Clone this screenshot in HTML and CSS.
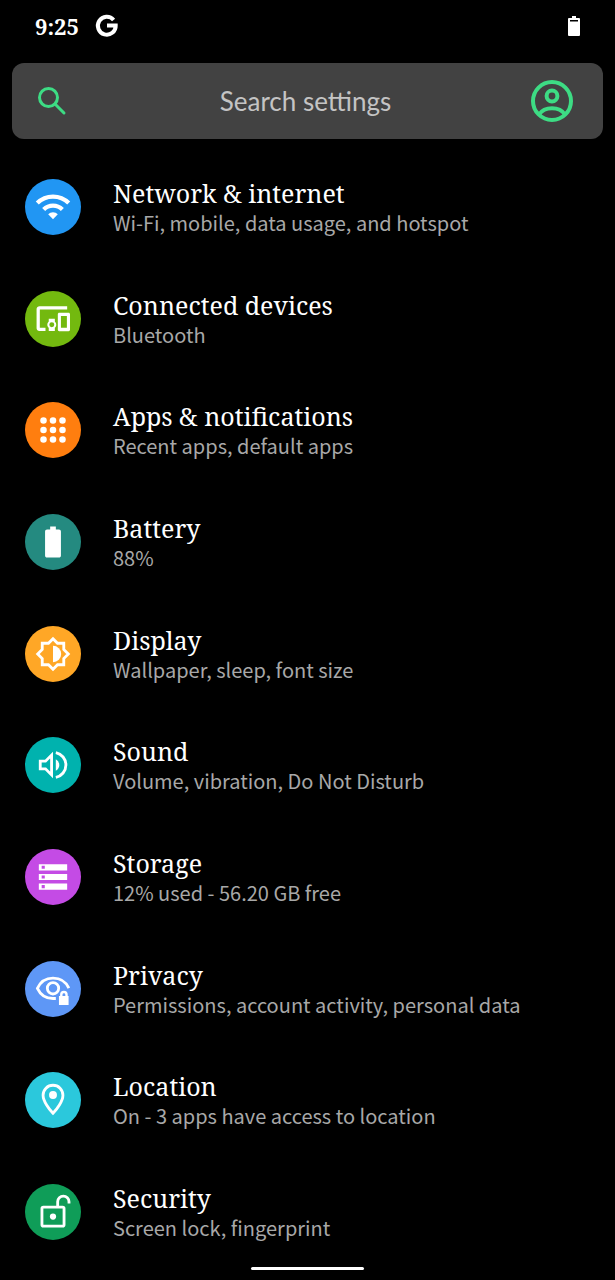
FILE: index.html
```html
<!DOCTYPE html>
<html lang="en">
	<head>
		<meta charset="utf-8">
		<meta name="viewport" content="width=device-width, initial-scale=1">
		<title>Settings</title>
		<link rel="stylesheet" href="styles.css">
	</head>
	<body>
		<header class="status">
			<span class="clock">9:25</span>
			<svg class="google" viewBox="0 0 22 22" aria-hidden="true"><path d="M17.6 5A8.900 8.900 0 1 0 19.700 10.500H11" fill="none" stroke="#fff" stroke-width="4"/></svg>
			<svg class="charge" viewBox="0 0 12 20" aria-hidden="true"><path d="M4 0h4v2h3a1 1 0 0 1 1 1v16a1 1 0 0 1-1 1H1a1 1 0 0 1-1-1V3a1 1 0 0 1 1-1h3z" fill="#fff"/><path d="M2 4h8v1.500H2z"/></svg>
		</header>

		<form class="search">
			<svg class="lens" viewBox="0 0 28 28" aria-hidden="true"><circle cx="10.5" cy="10.500" r="9"/><path d="M17 17l9 9"/></svg>
			<input type="text" placeholder="Search settings" aria-label="Search settings">
			<button type="button" class="account" aria-label="Account">
				<svg viewBox="0 0 42 42"><circle cx="21" cy="21" r="19"/><circle cx="21" cy="16" r="5.4"/><path d="M8 34.5C11 30 16 28.2 21 28.2S31 30 34 34.5"/></svg>
			</button>
		</form>

		<main class="list">
			<a class="row" href="#network">
				<span class="icon network"><svg viewBox="0 0 24 24"><path d="M.9 9.200a15.700 15.700 0 0 1 22.200 0M5.400 13.800a9.300 9.300 0 0 1 13.200 0" fill="none" stroke="#fff" stroke-width="3"/><path d="M8.600 17.100a4.800 4.800 0 0 1 6.800 0L12 20.600z"/></svg></span>
				<span class="text"><span class="title">Network &amp; internet</span><span class="summary">Wi-Fi, mobile, data usage, and hotspot</span></span>
			</a>
			<a class="row" href="#devices">
				<span class="icon devices"><svg viewBox="0 0 24 24"><path d="M3 5.300h19V3H2.500C1.400 3 .4 3.900.4 5v13.500c0 1.100.9 2 2 2h4.300v-2.300H2.700V5.300zm10.300 6.500H9v1.980c-.61.55-1 1.330-1 2.220s.39 1.670 1 2.220v2.280h4.300v-2.280c.61-.55 1-1.340 1-2.220s-.39-1.670-1-2.220v-1.980zM11.150 17.800a1.750 1.750 0 1 1 0-3.500 1.750 1.750 0 0 1 0 3.500zM23 7.600h-6.600c-.6 0-1 .5-1 1v11c0 .5.400 1 1 1H23c.6 0 1-.5 1-1v-11c0-.5-.4-1-1-1zm-1.200 10.600h-4.200v-8.400h4.200v8.400z"/></svg></span>
				<span class="text"><span class="title">Connected devices</span><span class="summary">Bluetooth</span></span>
			</a>
			<a class="row" href="#apps">
				<span class="icon apps"><svg viewBox="0 0 24 24"><circle cx="5.300" cy="5.300" r="2.300"/><circle cx="12" cy="5.300" r="2.300"/><circle cx="18.700" cy="5.300" r="2.300"/><circle cx="5.300" cy="12" r="2.300"/><circle cx="12" cy="12" r="2.300"/><circle cx="18.700" cy="12" r="2.300"/><circle cx="5.300" cy="18.700" r="2.300"/><circle cx="12" cy="18.700" r="2.300"/><circle cx="18.700" cy="18.700" r="2.300"/></svg></span>
				<span class="text"><span class="title">Apps &amp; notifications</span><span class="summary">Recent apps, default apps</span></span>
			</a>
			<a class="row" href="#battery">
				<span class="icon battery"><svg viewBox="0 0 24 24"><path d="M16.200 3.200H14V1h-4v2.200H7.800c-.8 0-1.400.6-1.400 1.300v17.200c0 .7.600 1.300 1.400 1.300h8.400c.8 0 1.400-.6 1.400-1.300V4.500c0-.7-.6-1.300-1.400-1.300z"/></svg></span>
				<span class="text"><span class="title">Battery</span><span class="summary">88%</span></span>
			</a>
			<a class="row" href="#display">
				<span class="icon display"><svg viewBox="0 0 24 24"><path d="M12 1.200l3.200 3.200h4.400v4.400l3.200 3.200-3.200 3.200v4.400h-4.400L12 22.800l-3.200-3.200H4.400v-4.400L1.200 12l3.200-3.200V4.400h4.400z" fill="none" stroke="#fff" stroke-width="2"/><path d="M12 6.200a5.800 5.800 0 0 1 0 11.600z"/></svg></span>
				<span class="text"><span class="title">Display</span><span class="summary">Wallpaper, sleep, font size</span></span>
			</a>
			<a class="row" href="#sound">
				<span class="icon sound"><svg viewBox="0 0 24 24"><path d="M3 9.300h3.700L11 5v14l-4.300-4.300H3z" fill="none" stroke="#fff" stroke-width="2"/><path d="M14 3.200a9 9 0 0 1 0 17.600" fill="none" stroke="#fff" stroke-width="2"/><path d="M14 8a4.500 4.500 0 0 1 0 8z"/></svg></span>
				<span class="text"><span class="title">Sound</span><span class="summary">Volume, vibration, Do Not Disturb</span></span>
			</a>
			<a class="row" href="#storage">
				<span class="icon storage"><svg viewBox="0 0 24 24"><path fill-rule="evenodd" d="M2 3h20v4.400H2zM4 4v2.200h2.200V4zM2 9.800h20v4.400H2zM4 10.900v2.200h2.200v-2.200zM2 16.600h20V21H2zM4 17.700v2.200h2.200v-2.200z"/></svg></span>
				<span class="text"><span class="title">Storage</span><span class="summary">12% used - 56.20 GB free</span></span>
			</a>
			<a class="row" href="#privacy">
				<span class="icon privacy"><svg viewBox="0 0 24 24"><path d="M23.200 11.400C21.200 7 16.900 4.300 12 4.300S3 7.200 1 11.500c2 4.300 6.100 7.200 11 7.200h2" fill="none" stroke="#fff" stroke-width="2"/><circle cx="12" cy="11.500" r="4" fill="none" stroke="#fff" stroke-width="2"/><path fill-rule="evenodd" d="M17 17v-1a2.700 2.700 0 0 1 5.400 0v1h.6v6.300h-6.800V17zm1.700 0h2v-1a1 1 0 0 0-2 0z"/></svg></span>
				<span class="text"><span class="title">Privacy</span><span class="summary">Permissions, account activity, personal data</span></span>
			</a>
			<a class="row" href="#location">
				<span class="icon location"><svg viewBox="0 0 24 24"><path d="M12 1.600c-3.900 0-7 3.100-7 7 0 4.200 4.300 10 7 12.800 2.700-2.800 7-8.600 7-12.800 0-3.900-3.100-7-7-7z" fill="none" stroke="#fff" stroke-width="2"/><circle cx="12" cy="8.500" r="2.800"/></svg></span>
				<span class="text"><span class="title">Location</span><span class="summary">On - 3 apps have access to location</span></span>
			</a>
			<a class="row" href="#security">
				<span class="icon security"><svg viewBox="0 0 24 24"><rect x="4.200" y="8.600" width="15.600" height="13.400" rx="1" fill="none" stroke="#fff" stroke-width="2"/><path d="M15.300 8.500V4.800a4 4 0 0 1 8 0V6" fill="none" stroke="#fff" stroke-width="2"/><circle cx="12" cy="15.200" r="2.200"/></svg></span>
				<span class="text"><span class="title">Security</span><span class="summary">Screen lock, fingerprint</span></span>
			</a>
		</main>

		<footer class="nav"><span class="pill"></span></footer>
	</body>
</html>
```
FILE: styles.css
```css
* {
	box-sizing: border-box;
}

body {
	display: flex;
	flex-direction: column;
	min-height: 100vh;
	margin: 0;
	background-color: #000;
	color: #fff;
	font-family: "Noto Sans CJK SC", "Noto Sans", sans-serif;
}

svg {
	display: block;
	overflow: visible;
}

/* status bar */
.status {
	display: flex;
	align-items: center;
	height: 51px;
	padding: 0 35px;
}

.clock {
	font: bold 22px/30px "Noto Serif", "Liberation Serif", serif;
}

.google {
	width: 22px;
	height: 22px;
	margin-left: 17px;
}

.charge {
	width: 12px;
	height: 20px;
	margin-left: auto;
}

/* search */
.search {
	display: flex;
	align-items: center;
	height: 76px;
	margin: 12px 12px 0;
	padding: 0 30px 0 26px;
	border-radius: 12px;
	background-color: #424242;
}

.search svg {
	fill: none;
	stroke: #3ddc84;
	stroke-width: 4;
}

.search .lens {
	width: 28px;
	height: 28px;
	stroke-width: 3;
	stroke-linecap: round;
}

.search input {
	flex: 1;
	min-width: 0;
	padding: 0 0 0 14px;
	border: 0;
	outline: 0;
	background: none;
	color: #fff;
	font: 26px/32px Lato, sans-serif;
	text-align: center;
}

.search input::placeholder {
	color: #c4c4c4;
	opacity: 1;
}

.account {
	width: 42px;
	height: 42px;
	padding: 0;
	border: 0;
	background: none;
}

/* settings rows */
.list {
	display: flex;
	flex: 1;
	flex-direction: column;
	justify-content: space-between;
	padding: 38px 25px 0;
}

.row {
	display: flex;
	align-items: center;
	gap: 32px;
	height: 60px;
	color: #fff;
	text-decoration: none;
}

.icon {
	display: flex;
	flex: none;
	align-items: center;
	justify-content: center;
	width: 56px;
	height: 56px;
	border-radius: 50%;
}

.icon svg {
	width: 34px;
	height: 34px;
	fill: #fff;
}

.network { background-color: #2196f3; }
.devices { background-color: #73b90f; }
.apps { background-color: #ff7e0f; }
.battery { background-color: #248a80; }
.display { background-color: #ffa726; }
.sound { background-color: #00b2ae; }
.storage { background-color: #c44be5; }
.privacy { background-color: #5e97f6; }
.location { background-color: #2bc8dc; }
.security { background-color: #0f9d58; }

.text {
	display: flex;
	flex-direction: column;
}

.title {
	font: 25px/32px "Noto Serif", "Liberation Serif", serif;
}

.summary {
	color: #a8a8a8;
	font-size: 20px;
	line-height: 28px;
}

.nav {
	display: flex;
	justify-content: center;
	height: 38px;
	padding-top: 25px;
}

.pill {
	width: 113px;
	height: 3px;
	border-radius: 2px;
	background-color: #fff;
}
```
